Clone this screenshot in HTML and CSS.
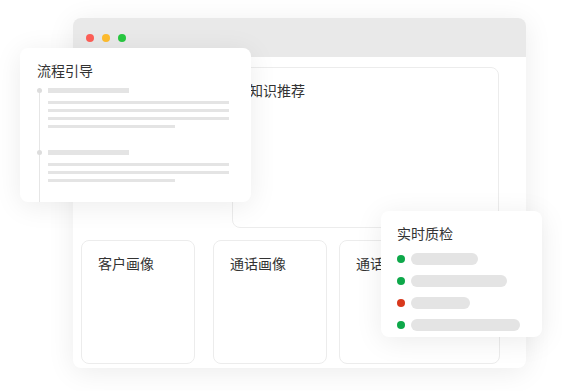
FILE: index.html
```html
<!DOCTYPE html>
<html lang="zh-CN">
<head>
    <meta charset="UTF-8">
    <meta name="viewport" content="width=device-width, initial-scale=1.0">
    <title>智能辅助</title>
    <link rel="stylesheet" href="styles.css">
</head>
<body>
    <div class="stage">
        <!-- main app window -->
        <div class="window">
            <div class="title-bar">
                <span class="light red"></span>
                <span class="light yellow"></span>
                <span class="light green"></span>
            </div>
            <div class="window-body">
                <div class="panel knowledge">
                    <div class="panel-title">知识推荐</div>
                </div>
                <div class="panel-row">
                    <div class="panel small">
                        <div class="panel-title">客户画像</div>
                    </div>
                    <div class="panel small">
                        <div class="panel-title">通话画像</div>
                    </div>
                    <div class="panel wide">
                        <div class="panel-title">通话记录</div>
                    </div>
                </div>
            </div>
        </div>

        <!-- floating: flow guide -->
        <div class="float-card flow">
            <div class="card-title">流程引导</div>
            <div class="timeline">
                <div class="step">
                    <div class="step-head"></div>
                    <div class="line"></div>
                    <div class="line"></div>
                    <div class="line"></div>
                    <div class="line short"></div>
                </div>
                <div class="step">
                    <div class="step-head"></div>
                    <div class="line"></div>
                    <div class="line"></div>
                    <div class="line short"></div>
                </div>
            </div>
        </div>

        <!-- floating: quality check -->
        <div class="float-card quality">
            <div class="card-title">实时质检</div>
            <ul class="checks">
                <li><span class="dot ok"></span><span class="bar" style="width: 67px"></span></li>
                <li><span class="dot ok"></span><span class="bar" style="width: 96px"></span></li>
                <li><span class="dot bad"></span><span class="bar" style="width: 59px"></span></li>
                <li><span class="dot ok"></span><span class="bar" style="width: 109px"></span></li>
            </ul>
        </div>
    </div>
</body>
</html>
```

FILE: styles.css
```css
:root{
    --text-color: #333;
    --line-color: #e4e4e4;
    --panel-border: #ececec;
    --soft-shadow: 0 4px 28px rgba(0, 0, 0, 0.08);
}
html,body{
    margin: 0;
    padding: 0;
    background: #fff;
    font-family: "Noto Sans CJK SC", "Noto Sans", sans-serif;
    color: var(--text-color);
}
.stage{
    position: relative;
    width: 562px;
    height: 391px;
    overflow: hidden;
}

/* =========
    Window
   ========= */
.window{
    position: absolute;
    left: 73px;
    top: 18px;
    width: 453px;
    height: 350px;
    border-radius: 8px;
    background: #fff;
    box-shadow: var(--soft-shadow);
    display: flex;
    flex-direction: column;
    overflow: hidden;
}
.title-bar{
    height: 40px;
    background: #e9e9e9;
    display: flex;
    align-items: center;
    gap: 8px;
    padding-left: 13px;
}
.light{
    width: 8px;
    height: 8px;
    border-radius: 50%;
}
.light.red{ background: #fe5f57; }
.light.yellow{ background: #febc2e; }
.light.green{ background: #28c840; }

.window-body{
    flex: 1;
    padding: 10px 26px 4px 8px;
    display: flex;
    flex-direction: column;
    gap: 12px;
}
.panel{
    border: 1px solid var(--panel-border);
    border-radius: 8px;
    padding: 12px 16px;
    box-sizing: border-box;
}
.panel-title{
    font-size: 14px;
    line-height: 20px;
}
.knowledge{
    margin-left: 151px;
    width: 267px;
    height: 161px;
}
.panel-row{
    display: flex;
    gap: 12px;
    height: 124px;
}
.panel.small{
    width: 114px;
}
.panel.small:first-child{
    margin-right: 6px;
}
.panel.wide{
    width: 161px;
}

/* ===============
    Floating cards
   =============== */
.float-card{
    position: absolute;
    background: #fff;
    border-radius: 8px;
    box-shadow: var(--soft-shadow);
    box-sizing: border-box;
}
.card-title{
    font-size: 14px;
    line-height: 20px;
}

.flow{
    left: 20px;
    top: 48px;
    width: 231px;
    height: 154px;
    padding: 12px 0 0 17px;
    overflow: hidden;
}
.timeline{
    margin-top: 8px;
    margin-left: 2px;
    border-left: 1px solid #e6e6e6;
    height: 120px;
    padding-left: 8px;
}
.step{
    position: relative;
    margin-bottom: 22px;
}
.step-head{
    width: 81px;
    height: 5px;
    background: var(--line-color);
    margin-bottom: 8px;
}
.step-head::before{
    content: "";
    position: absolute;
    left: -11.5px;
    top: 0;
    width: 5px;
    height: 5px;
    border-radius: 50%;
    background: #ddd;
}
.line{
    width: 181px;
    height: 3px;
    background: var(--line-color);
    margin-bottom: 5px;
}
.line.short{
    width: 127px;
}

.quality{
    left: 381px;
    top: 211px;
    width: 161px;
    height: 126px;
    padding: 12px 16px 0 16px;
}
.checks{
    list-style: none;
    margin: 10px 0 0 0;
    padding: 0;
    display: flex;
    flex-direction: column;
    gap: 10px;
}
.checks li{
    display: flex;
    align-items: center;
    gap: 6px;
    height: 12px;
}
.dot{
    width: 8px;
    height: 8px;
    border-radius: 50%;
}
.dot.ok{ background: #0ea84a; }
.dot.bad{ background: #d8381c; }
.bar{
    height: 12px;
    border-radius: 6px;
    background: var(--line-color);
}
```
